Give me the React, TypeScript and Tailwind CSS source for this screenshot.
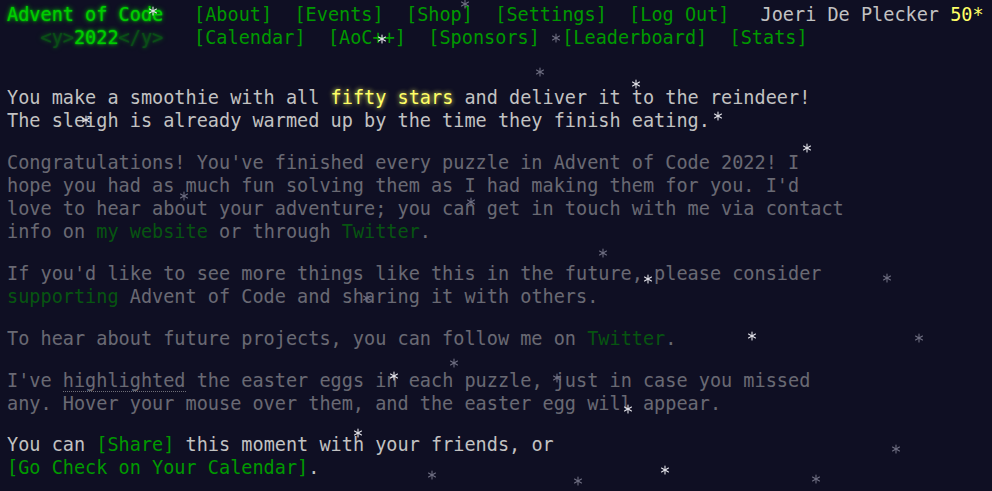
import React from 'react';

// falling stars over the page: x, y are the centre, b = bright
const STARS: { x: number; y: number; b: boolean }[] = [
  { x: 153, y: 11, b: true },
  { x: 465, y: 4, b: false },
  { x: 382, y: 39, b: true },
  { x: 556, y: 38, b: false },
  { x: 540, y: 72, b: false },
  { x: 636, y: 84, b: true },
  { x: 86, y: 120, b: true },
  { x: 718, y: 116, b: true },
  { x: 807, y: 148, b: true },
  { x: 184, y: 196, b: false },
  { x: 471, y: 202, b: false },
  { x: 603, y: 253, b: false },
  { x: 648, y: 279, b: true },
  { x: 887, y: 278, b: false },
  { x: 367, y: 298, b: false },
  { x: 752, y: 336, b: true },
  { x: 919, y: 338, b: false },
  { x: 454, y: 363, b: false },
  { x: 394, y: 376, b: true },
  { x: 557, y: 378, b: false },
  { x: 628, y: 409, b: true },
  { x: 358, y: 433, b: true },
  { x: 896, y: 449, b: false },
  { x: 665, y: 470, b: true },
  { x: 432, y: 475, b: false },
  { x: 578, y: 481, b: false },
  { x: 816, y: 479, b: false },
];

const Star: React.FC<{ x: number; y: number; b: boolean }> = ({ x, y, b }) => (
  <svg
    className="absolute pointer-events-none"
    width="10"
    height="10"
    viewBox="-5 -5 10 10"
    style={{ left: x - 5, top: y - 5 }}
  >
    <g stroke={b ? '#e4e4ea' : '#6f6f82'} strokeWidth="1.1" strokeLinecap="round">
      <line x1="0" y1="-4" x2="0" y2="4" />
      <line x1="-3.5" y1="-2" x2="3.5" y2="2" />
      <line x1="-3.5" y1="2" x2="3.5" y2="-2" />
    </g>
  </svg>
);

const NavLink: React.FC<{ children: React.ReactNode }> = ({ children }) => (
  <a className="text-[#009900] no-underline whitespace-pre">{children}</a>
);

const glowGreen = '[text-shadow:0_0_2px_#00cc00,0_0_5px_#00cc00]';

export default function App() {
  return (
    <div
      className="relative min-h-[491px] w-full overflow-hidden bg-[#0f0f23] text-[#c2c2c2] text-[18.55px] leading-[23px] pt-[3px] pl-[7px]"
      style={{ fontFamily: '"DejaVu Sans Mono", "Liberation Mono", monospace' }}
    >
      <header>
        <div className="flex whitespace-pre">
          <h1 className={`w-[187px] shrink-0 font-normal text-[#00cc00] ${glowGreen}`}>Advent of Code</h1>
          <nav className="flex gap-[22.3px]">
            <NavLink>[About]</NavLink>
            <NavLink>[Events]</NavLink>
            <NavLink>[Shop]</NavLink>
            <NavLink>[Settings]</NavLink>
            <NavLink>[Log Out]</NavLink>
          </nav>
          <div className="ml-[31px]">
            Joeri De Plecker <span className="text-[#ffff66]">50*</span>
          </div>
        </div>
        <div className="flex whitespace-pre">
          <h1 className="w-[187px] shrink-0 font-normal text-[#00cc00]">
            <span className={`opacity-[0.33] ${glowGreen}`}>{'   <y>'}</span>
            <span className={glowGreen}>2022</span>
            <span className={`opacity-[0.33] ${glowGreen}`}>{'</y>'}</span>
          </h1>
          <nav className="flex gap-[22.3px]">
            <NavLink>[Calendar]</NavLink>
            <NavLink>[AoC++]</NavLink>
            <NavLink>[Sponsors]</NavLink>
            <NavLink>[Leaderboard]</NavLink>
            <NavLink>[Stats]</NavLink>
          </nav>
        </div>
      </header>

      <main className="mt-[37px] flex flex-col gap-[18.9px] whitespace-pre">
        <p>
          You make a smoothie with all{' '}
          <span className="text-[#ffff66] [text-shadow:0_0_5px_#ffff66]">fifty stars</span> and deliver it to the reindeer!
          <br />
          The sleigh is already warmed up by the time they finish eating.
        </p>
        <p className="opacity-50">
          Congratulations! You've finished every puzzle in Advent of Code 2022! I
          <br />
          hope you had as much fun solving them as I had making them for you. I'd
          <br />
          love to hear about your adventure; you can get in touch with me via contact
          <br />
          info on <NavLink>my website</NavLink> or through <NavLink>Twitter</NavLink>.
        </p>
        <p className="opacity-50">
          If you'd like to see more things like this in the future, please consider
          <br />
          <NavLink>supporting</NavLink> Advent of Code and sharing it with others.
        </p>
        <p className="opacity-50">
          To hear about future projects, you can follow me on <NavLink>Twitter</NavLink>.
        </p>
        <p className="opacity-50">
          I've <span className="border-b border-dotted border-[#cccccc]">highlighted</span> the easter eggs in each puzzle, just in case you missed
          <br />
          any. Hover your mouse over them, and the easter egg will appear.
        </p>
        <p>
          You can <NavLink>[Share]</NavLink> this moment with your friends, or
          <br />
          <NavLink>[Go Check on Your Calendar]</NavLink>.
        </p>
      </main>

      {STARS.map((s, i) => (
        <Star key={i} {...s} />
      ))}
    </div>
  );
}
